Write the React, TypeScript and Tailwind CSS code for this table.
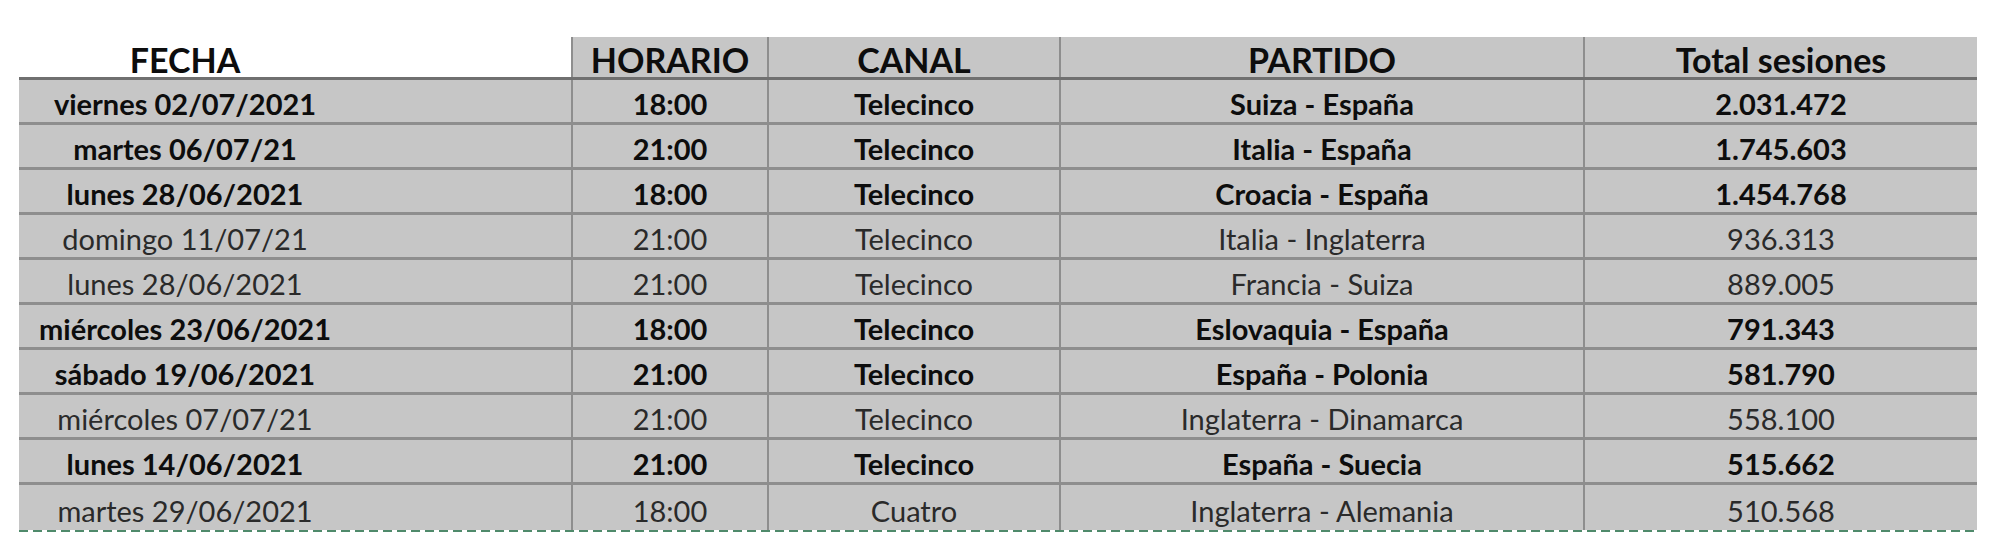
const rows = [
  { fecha: "viernes 02/07/2021", hora: "18:00", canal: "Telecinco", partido: "Suiza - España", total: "2.031.472", bold: true },
  { fecha: "martes 06/07/21", hora: "21:00", canal: "Telecinco", partido: "Italia - España", total: "1.745.603", bold: true },
  { fecha: "lunes 28/06/2021", hora: "18:00", canal: "Telecinco", partido: "Croacia - España", total: "1.454.768", bold: true },
  { fecha: "domingo 11/07/21", hora: "21:00", canal: "Telecinco", partido: "Italia - Inglaterra", total: "936.313", bold: false },
  { fecha: "lunes 28/06/2021", hora: "21:00", canal: "Telecinco", partido: "Francia - Suiza", total: "889.005", bold: false },
  { fecha: "miércoles 23/06/2021", hora: "18:00", canal: "Telecinco", partido: "Eslovaquia - España", total: "791.343", bold: true },
  { fecha: "sábado 19/06/2021", hora: "21:00", canal: "Telecinco", partido: "España - Polonia", total: "581.790", bold: true },
  { fecha: "miércoles 07/07/21", hora: "21:00", canal: "Telecinco", partido: "Inglaterra - Dinamarca", total: "558.100", bold: false },
  { fecha: "lunes 14/06/2021", hora: "21:00", canal: "Telecinco", partido: "España - Suecia", total: "515.662", bold: true },
  { fecha: "martes 29/06/2021", hora: "18:00", canal: "Cuatro", partido: "Inglaterra - Alemania", total: "510.568", bold: false },
];

const App = () => {
  return (
    <div className="w-[2000px] h-[553px] bg-white pt-[37px] pl-[19px] font-['Lato',sans-serif]">
      <div className="w-[1958px]">
        {/* header */}
        <div className="grid grid-cols-[554px_196px_292px_524px_392px] h-[43px] border-b-[3px] border-[#707070] text-[34px] font-bold text-[#0d0d0d] leading-none">
          <div className="flex items-center pt-[5px] border-r-2 border-[#8e8e8e] bg-white">
            <div className="w-[332px] text-center">FECHA</div>
          </div>
          <div className="flex items-center justify-center pt-[5px] border-r-2 border-[#8e8e8e] bg-[#c6c6c6]">HORARIO</div>
          <div className="flex items-center justify-center pt-[5px] border-r-2 border-[#8e8e8e] bg-[#c6c6c6]">CANAL</div>
          <div className="flex items-center justify-center pt-[5px] border-r-2 border-[#8e8e8e] bg-[#c6c6c6]">PARTIDO</div>
          <div className="flex items-center justify-center pt-[5px] bg-[#c6c6c6]">Total sesiones</div>
        </div>
        {rows.map((r, i) => (
          <div
            key={i}
            className={`grid grid-cols-[554px_196px_292px_524px_392px] h-[45px] bg-[#c6c6c6] text-[29px] leading-none ${
              i < rows.length - 1 ? "border-b-[3px] border-[#8e8e8e]" : ""
            } ${r.bold ? "font-bold text-[#0d0d0d]" : "font-normal text-[#2a2a2a]"}`}
          >
            <div className="flex items-center pt-[5px] border-r-2 border-[#8e8e8e]">
              <div className="w-[332px] text-center">{r.fecha}</div>
            </div>
            <div className="flex items-center justify-center pt-[5px] border-r-2 border-[#8e8e8e]">{r.hora}</div>
            <div className="flex items-center justify-center pt-[5px] border-r-2 border-[#8e8e8e]">{r.canal}</div>
            <div className="flex items-center justify-center pt-[5px] border-r-2 border-[#8e8e8e]">{r.partido}</div>
            <div className="flex items-center justify-center pt-[5px]">{r.total}</div>
          </div>
        ))}
        <div className="h-[2px] bg-[repeating-linear-gradient(to_right,#4f8a6b_0_9px,transparent_9px_14px)]" />
      </div>
    </div>
  );
};

export default App;
